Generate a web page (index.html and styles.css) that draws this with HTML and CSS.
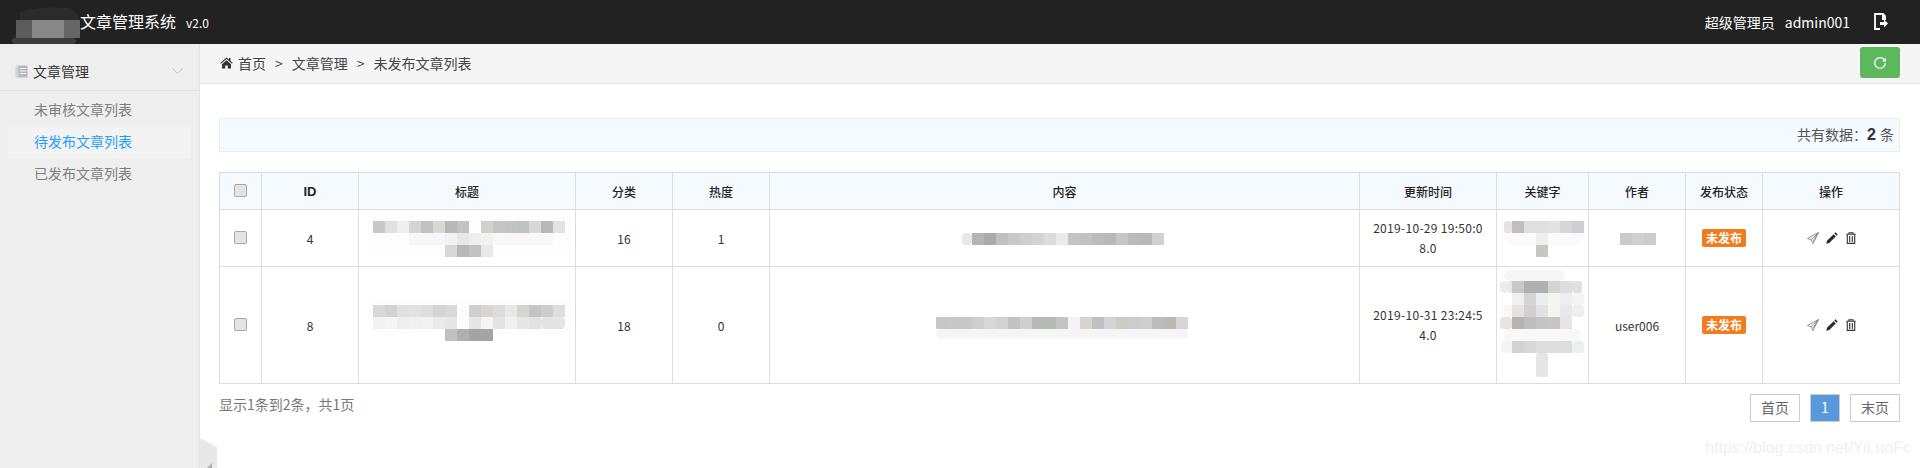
FILE: index.html
```html
<!DOCTYPE html>
<html lang="zh-CN">
<head>
<meta charset="utf-8">
<title>文章管理系统</title>
<link rel="stylesheet" href="styles.css">
</head>
<body>
<header class="topbar">
  <div class="brand">
    <svg class="logo-blur" width="72" height="38" viewBox="0 0 72 38"><path d="M4 30 Q12 28 12 22 V6 Q30 0 62 2 Q74 10 72 22 Q66 34 50 38 H20 Q8 38 4 30Z" fill="#2b2b2b"/><rect x="8" y="14" width="16" height="18" fill="#5c5c5c"/><rect x="24" y="14" width="32" height="18" fill="#888"/><rect x="56" y="14" width="16" height="18" fill="#666"/><rect x="4" y="32" width="64" height="6" rx="3" fill="#3c3c3c"/></svg>
    <span class="brand-name">文章管理系统</span>
    <span class="brand-ver">v2.0</span>
  </div>
  <div class="user">
    <span class="role">超级管理员</span>
    <span class="uname">admin001</span>
    <svg class="logout" width="14" height="17" viewBox="0 0 14 17"><path d="M9 1H1V16H6" fill="none" stroke="#fff" stroke-width="1.800"/><path d="M8 0H9.500L12 3V7H8Z" fill="#fff"/><path d="M6 9H10V6.500L14 10.500L10 14.500V12H6Z" fill="#fff"/></svg>
  </div>
</header>
<div class="layout">
  <aside class="sidebar">
    <div class="menu-head">
      <svg class="menu-icon" width="13" height="13" viewBox="0 0 13 13"><rect x="2.500" y="0.500" width="10" height="12" fill="#b5bac0"/><rect x="0.500" y="1.500" width="3" height="11" fill="#d0d3d6"/><path d="M5 3.500H11M5 6H11M5 8.500H11" stroke="#eee" stroke-width="1"/></svg>
      <span class="menu-title">文章管理</span>
      <svg class="chevron" width="11" height="6" viewBox="0 0 11 6"><path d="M0.500 0.500L5.500 5.500L10.500 0.500" fill="none" stroke="#c4c4c4" stroke-width="1"/></svg>
    </div>
    <ul class="menu">
      <li class="menu-item">未审核文章列表</li>
      <li class="menu-item is-active">待发布文章列表</li>
      <li class="menu-item">已发布文章列表</li>
    </ul>
  </aside>
  <main class="main">
    <div class="crumbs">
      <nav class="crumb-path">
        <svg class="home" width="13" height="12" viewBox="0 0 13 12"><path d="M6.500 0.500L0.300 6L1 6.800L6.500 2L12 6.800L12.700 6L10.500 4V1H9V2.700Z" fill="#333"/><path d="M2 7.200L6.500 3.200L11 7.200V11.500H7.800V8.500H5.200V11.500H2Z" fill="#333"/></svg>
        <span>首页</span><span class="sep">&gt;</span><span>文章管理</span><span class="sep">&gt;</span><span>未发布文章列表</span>
      </nav>
      <button class="refresh" type="button" aria-label="刷新">
        <svg width="14" height="14" viewBox="0 0 14 14"><path d="M11.500 4.200A5.300 5.300 0 1 0 12.300 7" fill="none" stroke="#fff" stroke-width="1.300"/><path d="M13 1.500V5.500H9Z" fill="#fff"/></svg>
      </button>
    </div>
    <div class="content">
      <div class="notice">共有数据：<strong>2</strong><span class="unit">条</span></div>
      <table class="grid">
        <colgroup>
          <col class="c-check"><col class="c-id"><col class="c-title"><col class="c-cat"><col class="c-hot"><col class="c-body"><col class="c-time"><col class="c-key"><col class="c-author"><col class="c-state"><col class="c-ops">
        </colgroup>
        <thead>
          <tr>
            <th><input class="check" type="checkbox"></th>
            <th class="strong">ID</th><th>标题</th><th>分类</th><th>热度</th><th>内容</th><th>更新时间</th><th>关键字</th><th>作者</th><th>发布状态</th><th>操作</th>
          </tr>
        </thead>
        <tbody>
          <tr class="row-a">
            <td><input class="check" type="checkbox"></td>
            <td>4</td>
            <td>
              <svg class="mosaic" width="216" height="56" viewBox="358 210 216 56">
                <rect x="365" y="215" width="204" height="42" rx="10" fill="#fdfdfd"/>
                <rect x="372" y="221" width="12" height="12" fill="#c8c8ca"/><rect x="384" y="221" width="12" height="12" fill="#e0e0e0"/><rect x="396" y="221" width="12" height="12" fill="#efefef"/><rect x="408" y="221" width="12" height="12" fill="#d4d4d4"/><rect x="420" y="221" width="12" height="12" fill="#c0c2c2"/><rect x="432" y="221" width="12" height="12" fill="#d8d8d4"/><rect x="444" y="221" width="12" height="12" fill="#bab8b8"/><rect x="456" y="221" width="12" height="12" fill="#c2c3c6"/><rect x="480" y="221" width="12" height="12" fill="#d0d0ce"/><rect x="492" y="221" width="12" height="12" fill="#c8c4c4"/><rect x="504" y="221" width="12" height="12" fill="#c0c4c4"/><rect x="516" y="221" width="12" height="12" fill="#c0c2c2"/><rect x="528" y="221" width="12" height="12" fill="#d8d8d8"/><rect x="540" y="221" width="12" height="12" fill="#b8b8ba"/><rect x="552" y="221" width="12" height="12" fill="#e2e2e2"/>
                <rect x="408" y="233" width="36" height="12" fill="#f7f7f7"/><rect x="444" y="233" width="12" height="12" fill="#f2f2f2"/><rect x="456" y="233" width="12" height="12" fill="#e8e8e8"/><rect x="468" y="233" width="12" height="12" fill="#eeeeee"/><rect x="480" y="233" width="12" height="12" fill="#f2f2f2"/><rect x="492" y="233" width="60" height="12" fill="#f8f8f8"/>
                <rect x="444" y="245" width="12" height="12" fill="#d8d8d8"/><rect x="456" y="245" width="12" height="12" fill="#b8b8b8"/><rect x="468" y="245" width="12" height="12" fill="#c2c2c4"/><rect x="480" y="245" width="12" height="12" fill="#e8e8e8"/>
              </svg>
            </td>
            <td>16</td>
            <td>1</td>
            <td>
              <svg class="mosaic" width="589" height="56" viewBox="770 210 589 56">
                <rect x="962" y="233" width="10" height="12" rx="4" fill="#e8e8e6"/>
                <rect x="972" y="233" width="12" height="12" fill="#b4b4b2"/><rect x="984" y="233" width="12" height="12" fill="#a8abae"/><rect x="996" y="233" width="12" height="12" fill="#c0c0c0"/><rect x="1008" y="233" width="12" height="12" fill="#c8c8c8"/><rect x="1020" y="233" width="12" height="12" fill="#cfcfcf"/><rect x="1032" y="233" width="12" height="12" fill="#d4d4d6"/><rect x="1044" y="233" width="12" height="12" fill="#dcdcdc"/><rect x="1056" y="233" width="12" height="12" fill="#eaeae8"/><rect x="1068" y="233" width="12" height="12" fill="#c4c4c4"/><rect x="1080" y="233" width="12" height="12" fill="#c4c0c0"/><rect x="1092" y="233" width="12" height="12" fill="#bcbcbc"/><rect x="1104" y="233" width="12" height="12" fill="#b8b8ba"/><rect x="1116" y="233" width="12" height="12" fill="#c6c6c6"/><rect x="1128" y="233" width="12" height="12" fill="#bcb9b6"/><rect x="1140" y="233" width="12" height="12" fill="#b6b8ba"/><rect x="1152" y="233" width="12" height="12" fill="#d0d2d2"/>
              </svg>
            </td>
            <td class="time">2019-10-29 19:50:08.0</td>
            <td>
              <svg class="mosaic" width="92" height="56" viewBox="1497 210 92 56">
                <rect x="1504" y="221" width="80" height="24" rx="9" fill="#fafafa"/>
                <rect x="1504" y="221" width="8" height="12" rx="3" fill="#e6e2e2"/><rect x="1512" y="221" width="12" height="12" fill="#bfbfbf"/><rect x="1524" y="221" width="12" height="12" fill="#dfdfdf"/><rect x="1536" y="221" width="12" height="12" fill="#dfdfdf"/><rect x="1548" y="221" width="12" height="12" fill="#e2e2e2"/><rect x="1560" y="221" width="12" height="12" fill="#d6d6d4"/><rect x="1572" y="221" width="12" height="12" fill="#ccd0d4"/>
                <rect x="1536" y="233" width="12" height="12" fill="#eeeeee"/>
                <rect x="1536" y="245" width="12" height="12" fill="#c6c6c4"/>
              </svg>
            </td>
            <td>
              <svg class="mosaic" width="96" height="56" viewBox="1589 210 96 56">
                <rect x="1620" y="233" width="12" height="12" fill="#ccc8d0"/><rect x="1632" y="233" width="12" height="12" fill="#d0cfd2"/><rect x="1644" y="233" width="12" height="12" fill="#cccccc"/>
              </svg>
            </td>
            <td><span class="badge">未发布</span></td>
            <td>
              <div class="ops">
                <svg width="12" height="12" viewBox="0 0 12 12"><path d="M11.500 0.500L0.500 6.500L4 7.800L6 11.500L11.500 0.500ZM11.500 0.500L4 7.800M11.500 0.500L6 9" fill="none" stroke="#858585" stroke-width="0.900"/></svg>
                <svg width="12" height="12" viewBox="0 0 12 12"><path d="M9.500 0.300L11.700 2.500L10.500 3.700L8.300 1.500ZM7.600 2.200L9.800 4.400L3.200 11L0.300 11.700L1 8.800Z" fill="#2b2b2b"/></svg>
                <svg width="10" height="12" viewBox="0 0 10 12"><path d="M0.300 2.300H9.700M3 2.300V0.700H7V2.300" fill="none" stroke="#333" stroke-width="1.100"/><path d="M1.300 2.500V11.400H8.700V2.500M3.700 4V10M6.300 4V10" fill="none" stroke="#333" stroke-width="1.100"/></svg>
              </div>
            </td>
          </tr>
          <tr class="row-b">
            <td><input class="check" type="checkbox"></td>
            <td>8</td>
            <td>
              <svg class="mosaic" width="216" height="116" viewBox="358 267 216 116">
                <rect x="366" y="299" width="204" height="36" rx="10" fill="#fdfdfd"/>
                <rect x="372" y="305" width="12" height="12" fill="#d8d8d8"/><rect x="384" y="305" width="12" height="12" fill="#d2d2d2"/><rect x="396" y="305" width="12" height="12" fill="#e0e0e0"/><rect x="408" y="305" width="12" height="12" fill="#e2e2e2"/><rect x="420" y="305" width="12" height="12" fill="#dedede"/><rect x="432" y="305" width="12" height="12" fill="#d4d4d4"/><rect x="444" y="305" width="12" height="12" fill="#d8d8dc"/><rect x="468" y="305" width="12" height="12" fill="#cfcfcf"/><rect x="480" y="305" width="12" height="12" fill="#d8d6d4"/><rect x="492" y="305" width="12" height="12" fill="#dcdcde"/><rect x="504" y="305" width="12" height="12" fill="#e8e8e8"/><rect x="516" y="305" width="12" height="12" fill="#d4d4d2"/><rect x="528" y="305" width="12" height="12" fill="#c4c4c6"/><rect x="540" y="305" width="12" height="12" fill="#ccccca"/><rect x="552" y="305" width="12" height="12" fill="#dedede"/>
                <rect x="372" y="317" width="12" height="12" fill="#f2f2f2"/><rect x="384" y="317" width="12" height="12" fill="#f6f4f4"/><rect x="396" y="317" width="12" height="12" fill="#eeeeee"/><rect x="408" y="317" width="12" height="12" fill="#f0f0f0"/><rect x="420" y="317" width="12" height="12" fill="#f2f2f2"/><rect x="432" y="317" width="12" height="12" fill="#eaeaea"/><rect x="444" y="317" width="12" height="12" fill="#e6e6e8"/><rect x="468" y="317" width="12" height="12" fill="#e6e6e8"/><rect x="480" y="317" width="12" height="12" fill="#f6f4f2"/><rect x="492" y="317" width="12" height="12" fill="#e4e4e6"/><rect x="504" y="317" width="12" height="12" fill="#f0f0f0"/><rect x="516" y="317" width="12" height="12" fill="#e6e6e6"/><rect x="528" y="317" width="12" height="12" fill="#e2e2e2"/><rect x="540" y="317" width="24" height="12" rx="4" fill="#e4e4e4"/>
                <rect x="444" y="329" width="12" height="12" fill="#c0c0c0"/><rect x="456" y="329" width="12" height="12" fill="#b0b0b0"/><rect x="468" y="329" width="24" height="12" fill="#a4a4a4"/>
              </svg>
            </td>
            <td>18</td>
            <td>0</td>
            <td>
              <svg class="mosaic" width="589" height="116" viewBox="770 267 589 116">
                <rect x="936" y="317" width="12" height="12" fill="#c8c6c6"/><rect x="948" y="317" width="24" height="12" fill="#c8c8c8"/><rect x="972" y="317" width="12" height="12" fill="#d0cecc"/><rect x="984" y="317" width="12" height="12" fill="#d8d8da"/><rect x="996" y="317" width="12" height="12" fill="#d2d2d2"/><rect x="1008" y="317" width="12" height="12" fill="#c2c2c4"/><rect x="1020" y="317" width="12" height="12" fill="#d0cece"/><rect x="1032" y="317" width="24" height="12" fill="#b8bab8"/><rect x="1056" y="317" width="12" height="12" fill="#c4c4c4"/><rect x="1068" y="317" width="12" height="12" fill="#f4f4f6"/><rect x="1080" y="317" width="12" height="12" fill="#d8d4d0"/><rect x="1092" y="317" width="12" height="12" fill="#c0c0c4"/><rect x="1104" y="317" width="12" height="12" fill="#d4d4d4"/><rect x="1116" y="317" width="12" height="12" fill="#ccccc4"/><rect x="1128" y="317" width="12" height="12" fill="#ccccca"/><rect x="1140" y="317" width="12" height="12" fill="#cecece"/><rect x="1152" y="317" width="12" height="12" fill="#bcbcc0"/><rect x="1164" y="317" width="12" height="12" fill="#bcb8b4"/><rect x="1176" y="317" width="12" height="12" fill="#d6d6d6"/>
                <rect x="936" y="329" width="252" height="9" rx="4" fill="#f5f5f5"/>
              </svg>
            </td>
            <td class="time">2019-10-31 23:24:54.0</td>
            <td>
              <svg class="mosaic" width="92" height="116" viewBox="1497 267 92 116">
                <rect x="1504" y="270" width="60" height="11" rx="5" fill="#f6f6f6"/>
                <rect x="1500" y="281" width="8" height="12" rx="4" fill="#ececec"/><rect x="1508" y="281" width="4" height="12" fill="#e8e8e8"/><rect x="1512" y="281" width="12" height="12" fill="#c8c8c4"/><rect x="1524" y="281" width="24" height="12" fill="#b0b0b0"/><rect x="1548" y="281" width="12" height="12" fill="#d4d4d6"/><rect x="1560" y="281" width="12" height="12" fill="#dedede"/><rect x="1572" y="281" width="10" height="12" rx="3" fill="#e0e0e0"/>
                <rect x="1512" y="293" width="12" height="12" fill="#f0f0f0"/><rect x="1524" y="293" width="12" height="12" fill="#d4d4d4"/><rect x="1536" y="293" width="12" height="12" fill="#ecedef"/><rect x="1548" y="293" width="12" height="12" fill="#f4f4f0"/><rect x="1560" y="293" width="12" height="12" fill="#eeeef0"/><rect x="1572" y="293" width="12" height="12" rx="3" fill="#f4f4f4"/>
                <rect x="1504" y="305" width="8" height="12" fill="#f8f8f8"/><rect x="1512" y="305" width="12" height="12" fill="#e6e2e2"/><rect x="1524" y="305" width="12" height="12" fill="#d0d0d0"/><rect x="1536" y="305" width="12" height="12" fill="#e2e2e4"/><rect x="1548" y="305" width="12" height="12" fill="#f4f4f0"/><rect x="1560" y="305" width="12" height="12" fill="#e8e8ea"/><rect x="1572" y="305" width="12" height="12" rx="3" fill="#efefef"/>
                <rect x="1500" y="317" width="12" height="12" rx="3" fill="#e8e4e2"/><rect x="1512" y="317" width="12" height="12" fill="#b4b4b4"/><rect x="1524" y="317" width="12" height="12" fill="#c0bebc"/><rect x="1536" y="317" width="12" height="12" fill="#c2c4c6"/><rect x="1548" y="317" width="12" height="12" fill="#c8c4c4"/><rect x="1560" y="317" width="12" height="12" fill="#e6e6e8"/>
                <rect x="1504" y="329" width="76" height="12" fill="#f8f8f8"/>
                <rect x="1501" y="341" width="11" height="12" rx="3" fill="#f4f4f4"/><rect x="1512" y="341" width="12" height="12" fill="#d4d2d0"/><rect x="1524" y="341" width="12" height="12" fill="#d8d8da"/><rect x="1536" y="341" width="24" height="12" fill="#dedede"/><rect x="1560" y="341" width="12" height="12" fill="#dcdede"/><rect x="1572" y="341" width="12" height="12" rx="3" fill="#eceef0"/>
                <rect x="1536" y="353" width="12" height="24" rx="2" fill="#e6e6e6"/>
              </svg>
            </td>
            <td>user006</td>
            <td><span class="badge">未发布</span></td>
            <td>
              <div class="ops">
                <svg width="12" height="12" viewBox="0 0 12 12"><path d="M11.500 0.500L0.500 6.500L4 7.800L6 11.500L11.500 0.500ZM11.500 0.500L4 7.800M11.500 0.500L6 9" fill="none" stroke="#858585" stroke-width="0.900"/></svg>
                <svg width="12" height="12" viewBox="0 0 12 12"><path d="M9.500 0.300L11.700 2.500L10.500 3.700L8.300 1.500ZM7.600 2.200L9.800 4.400L3.200 11L0.300 11.700L1 8.800Z" fill="#2b2b2b"/></svg>
                <svg width="10" height="12" viewBox="0 0 10 12"><path d="M0.300 2.300H9.700M3 2.300V0.700H7V2.300" fill="none" stroke="#333" stroke-width="1.100"/><path d="M1.300 2.500V11.400H8.700V2.500M3.700 4V10M6.300 4V10" fill="none" stroke="#333" stroke-width="1.100"/></svg>
              </div>
            </td>
          </tr>
        </tbody>
      </table>
      <div class="pager-row">
        <span class="summary">显示1条到2条，共1页</span>
        <div class="pager">
          <a class="page">首页</a>
          <a class="page is-current">1</a>
          <a class="page">末页</a>
        </div>
      </div>
    </div>
  </main>
</div>
<svg class="collapse" width="18" height="30" viewBox="0 0 18 30"><path d="M0 0L17 9V30H0Z" fill="#e8e8e8"/><path d="M12 25V30H7Z" fill="#b0b0b0"/></svg>
<div class="watermark">https://blog.csdn.net/YiLuoFc</div>
</body>
</html>
```
FILE: styles.css
```css
* { box-sizing: border-box; }
html, body { margin: 0; height: 100%; }
body {
  position: relative;
  height: 468px;
  overflow: hidden;
  background: #fff;
  color: #333;
  font-family: "Noto Sans CJK SC", "Noto Sans", sans-serif;
  font-size: 14px;
}
.topbar {
  height: 44px;
  background: #222;
  color: #fff;
  display: flex;
  align-items: center;
  justify-content: space-between;
  padding: 0 32px 0 8px;
}
.brand { display: flex; align-items: center; }
.logo-blur { display: block; margin-top: 6px; }
.brand-name { font-size: 16px; line-height: 42px; height: 44px; }
.brand-ver { font-size: 12px; margin-left: 10px; }
.user { display: flex; align-items: center; }
.uname { margin-left: 10px; }
.logout { margin-left: 24px; margin-top: -1px; }
.layout { display: flex; height: 424px; }
.sidebar {
  width: 200px;
  flex: none;
  background: #eee;
  border-right: 1px solid #e4e4e4;
}
.menu-head {
  height: 47px;
  display: flex;
  align-items: center;
  padding: 8px 16px 0 15px;
  border-bottom: 1px solid #e2e2e2;
  color: #333;
}
.menu-title { margin-left: 5px; flex: 1; }
.menu { list-style: none; margin: 0; padding: 3px 8px 0; }
.menu-item {
  height: 32px;
  line-height: 31px;
  padding-left: 26px;
  color: #7f7f7f;
}
.menu-item.is-active { background: #f3f3f3; color: #1e9fff; }
.main { flex: 1; min-width: 0; }
.crumbs {
  height: 40px;
  background: #f5f5f5;
  border-bottom: 1px solid #e5e5e5;
  display: flex;
  align-items: center;
  justify-content: space-between;
  padding: 0 20px 2px;
}
.crumb-path { display: flex; align-items: center; color: #444; }
.home { margin-right: 5px; }
.sep { margin: 0 9px; color: #444; }
.refresh {
  width: 40px;
  height: 31px;
  padding: 0;
  border: 0;
  border-radius: 3px;
  background: #5cb85c;
  display: flex;
  align-items: center;
  justify-content: center;
}
.content { padding: 34px 20px 0 19px; }
.notice {
  height: 34px;
  line-height: 31px;
  background: #f5fafe;
  border: 1px solid #e8eef2;
  text-align: right;
  padding-right: 5px;
  color: #555;
}
.notice strong { font-size: 16px; color: #333; font-family: "Liberation Sans", sans-serif; margin-right: 4px; }
.grid {
  width: 1681px;
  margin-top: 20px;
  table-layout: fixed;
  border-collapse: collapse;
  font-size: 12px;
  color: #333;
  text-align: center;
}
.c-check { width: 42px; }
.c-id { width: 97px; }
.c-title { width: 217px; }
.c-cat { width: 97px; }
.c-hot { width: 97px; }
.c-body { width: 590px; }
.c-time { width: 137px; }
.c-key { width: 92px; }
.c-author { width: 97px; }
.c-state { width: 77px; }
.c-ops { width: 137px; }
.grid th, .grid td { border: 1px solid #ddd; padding: 0; vertical-align: middle; }
.grid th { height: 37px; background: #f5fafe; font-weight: 500; color: #222; }
.grid th.strong { font-weight: 700; font-size: 13px; font-family: "Liberation Sans", sans-serif; }
.row-a td { height: 57px; }
.row-b td { height: 117px; }
.check {
  display: block;
  margin: -2px auto 0;
  width: 13px;
  height: 13px;
  appearance: none;
  border: 1px solid #a8a8a8;
  border-radius: 2px;
  background: #e4e4e4;
}
.mosaic { display: block; }
.grid td.time { padding: 0 12px; line-height: 20px; letter-spacing: 0.3px; word-break: break-all; }
.badge {
  display: inline-block;
  width: 44px;
  height: 18px;
  line-height: 18px;
  border-radius: 2px;
  background: #f37b1d;
  color: #fff;
  font-weight: 700;
  font-size: 12px;
}
.ops { display: flex; justify-content: center; align-items: center; gap: 7.5px; }
.ops svg { display: block; }
.pager-row {
  display: flex;
  justify-content: space-between;
  align-items: flex-start;
  margin-top: 10px;
}
.summary { color: #777; line-height: 21px; }
.pager { display: flex; gap: 10px; }
.page {
  width: 50px;
  height: 28px;
  line-height: 25px;
  border: 1px solid #ccc;
  text-align: center;
  color: #666;
}
.page.is-current { width: 30px; background: #5a98de; color: #fff; }
.collapse { position: absolute; left: 200px; top: 438px; display: block; }
.watermark {
  position: absolute;
  right: 9px;
  top: 437px;
  font-family: "Liberation Sans", sans-serif;
  font-size: 16px;
  color: #f0f0f0;
  line-height: 22px;
}
```
